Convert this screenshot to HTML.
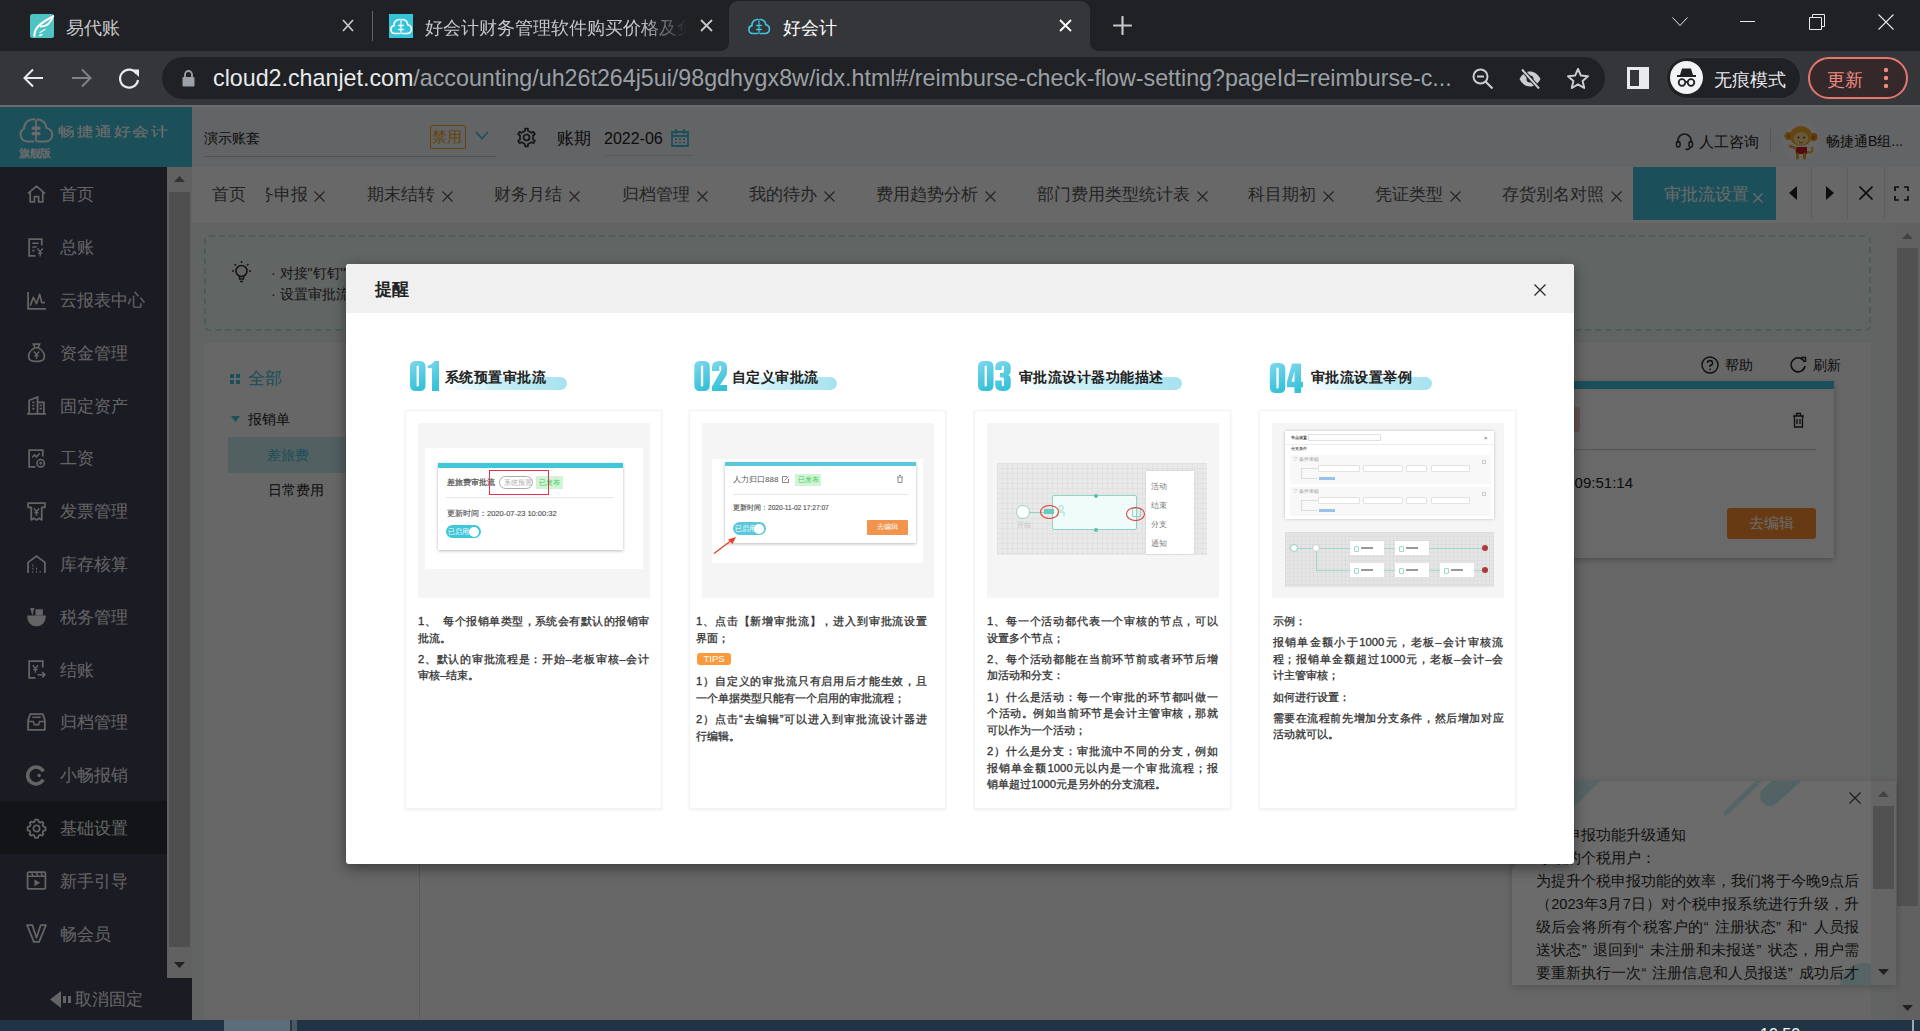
<!DOCTYPE html>
<html><head><meta charset="utf-8">
<style>
*{box-sizing:border-box;margin:0;padding:0}
html,body{width:1920px;height:1031px;overflow:hidden;background:#202124;font-family:"Liberation Sans",sans-serif}
.abs{position:absolute}
.qo,.qc{font-style:normal;display:inline-block;width:0.75em}
.qo{text-align:right}
.qc{text-align:left}
.mi{left:60px;font-size:17px;line-height:20px;color:#eee;white-space:nowrap}
.tb{position:absolute;top:185px;font-size:17px;line-height:20px;color:#555;white-space:nowrap}
.tx{position:absolute;top:191px}
svg{display:block}
/* ---------- browser chrome ---------- */
#tabstrip{position:absolute;left:0;top:0;width:1920px;height:51px;background:#202124}
.tabtxt{position:absolute;top:15.5px;font-size:18px;line-height:24px;color:#c4c7cb;white-space:nowrap}
#toolbar{position:absolute;left:0;top:51px;width:1920px;height:54px;background:#35363a}
#omni{position:absolute;left:162px;top:6px;width:1443px;height:42px;border-radius:21px;background:#202124}
#url{position:absolute;left:51px;top:7px;font-size:23.25px;line-height:28px;color:#9aa0a6;white-space:nowrap;letter-spacing:0}
#url b{font-weight:normal;color:#e8eaed}
/* ---------- page ---------- */
#page{position:absolute;left:0;top:0;width:1920px;height:1020px;background:#eaeeec;overflow:hidden}
#tabstrip,#toolbar{z-index:5}
#taskbar{position:absolute;left:0;top:1020px;width:1920px;height:11px;background:#213445;overflow:hidden;z-index:6}
#mask{position:absolute;left:0;top:105px;width:1920px;height:915px;background:rgba(0,0,0,.58)}

/* ---------- modal ---------- */
#modal{position:absolute;left:346px;top:264px;width:1228px;height:600px;background:#fff;border-radius:3px;box-shadow:0 4px 14px rgba(0,0,0,.45);z-index:3;overflow:hidden}
#mhead{position:absolute;left:0;top:0;width:1228px;height:49px;background:#f0f0f0}
#mtitle{position:absolute;left:29px;top:15px;font-size:16.5px;line-height:20px;font-weight:bold;color:#222}
.card{position:absolute;top:146px;width:257px;height:399px;background:#fff;border:1px solid #f3f3f3;box-shadow:0 1px 3px 0 rgba(0,0,0,.07)}
.shot{position:absolute;top:12px;left:12px;width:232px;height:175px;background:#f5f5f5;overflow:hidden}
.txt{position:absolute;top:349px;width:231px;font-size:11.3px;line-height:16.6px;color:#333;font-weight:normal;-webkit-text-stroke:0.3px #333;z-index:2}
.pp{margin-bottom:4.6px}
.lf{white-space:nowrap;text-align:justify;text-align-last:justify}
.ll{white-space:nowrap}
.tips{margin:7px 0 8px 1px;width:34px;height:12px;line-height:12px;text-align:center;border-radius:3px;background:#fa9a3c;color:#fff;font-size:9.5px;font-weight:normal;-webkit-text-stroke:0}
.num{position:absolute;top:96px}
.htitle{position:absolute;top:104px;font-size:14.4px;letter-spacing:0.45px;line-height:18px;font-weight:bold;color:#222;white-space:nowrap;z-index:2}
.pill{position:absolute;top:113px;height:13px;border-radius:0 7px 7px 0;background:linear-gradient(90deg,rgba(168,228,240,0) 0%,rgba(168,228,240,.6) 40%,#a6e2ef 100%)}

.m{position:absolute;white-space:nowrap;line-height:1}
.sw{position:absolute;background:#fff}
.sel{position:absolute;height:7px;border:1px solid #e2e2e2;background:#fff;border-radius:1px}
.fn{position:absolute;width:34px;height:14px;background:#fff}
.fn:before{content:"";position:absolute;left:4px;top:5px;width:3px;height:4px;border:1px solid #9fd8cc;border-radius:1px}
.fn:after{content:"";position:absolute;left:11px;top:6px;width:12px;height:2px;background:#999}
</style></head><body>
<div id="tabstrip">
  <!-- tab1 -->
  <svg class="abs" style="left:30px;top:14px" width="24" height="24" viewBox="0 0 24 24"><rect width="24" height="24" rx="2.5" fill="#4fc3c3"/><path d="M4.5 22C4 15 9 9.5 23 2.5C21 8 17 12.5 11 12.5" stroke="#fff" fill="none" stroke-width="2" stroke-linecap="round"/><path d="M10 18.5L15 15.5M9.5 21.5L12 20.5" stroke="#e8f8f8" stroke-width="1.4" stroke-linecap="round"/></svg>
  <div class="tabtxt" style="left:66px">易代账</div>
  <svg class="abs" style="left:342px;top:19px" width="12" height="13" viewBox="0 0 12 13"><path d="M1 1L11 12M11 1L1 12" stroke="#c4c7c5" stroke-width="1.8"/></svg>
  <div class="abs" style="left:372px;top:11px;width:1px;height:30px;background:#5f6368"></div>
  <!-- tab2 -->
  <svg class="abs" style="left:389px;top:14px" width="24" height="24" viewBox="0 0 24 24"><rect width="24" height="24" fill="#35c3da"/><path d="M10.5 19.5H6A4 4 0 0 1 5 11.6A5.5 5.5 0 0 1 11 5.5M13 5.5A5.5 5.5 0 0 1 18.8 10.8A4.4 4.4 0 0 1 18.5 19.5H13.5" stroke="#fff" fill="none" stroke-width="1.6" stroke-linecap="round"/><path d="M12 6V20" stroke="#fff" stroke-width="1.6" opacity=".7"/><path d="M9.8 11.5H14.2M9.8 15.5H14.2" stroke="#fff" stroke-width="1.6" stroke-linecap="round"/></svg>
  <div class="tabtxt" style="left:425px;width:262px;overflow:hidden;-webkit-mask-image:linear-gradient(90deg,#000 215px,transparent 262px)">好会计财务管理软件购买价格及免</div>
  <svg class="abs" style="left:700px;top:19px" width="13" height="13" viewBox="0 0 13 13"><path d="M1 1L12 12M12 1L1 12" stroke="#c4c7c5" stroke-width="1.8"/></svg>
  <!-- active tab -->
  <div class="abs" style="left:729px;top:1px;width:361px;height:50px;background:#35363a;border-radius:9px 9px 0 0"></div>
  <div class="abs" style="left:721px;top:43px;width:8px;height:8px;background:radial-gradient(circle at 0 0,transparent 7.5px,#35363a 8.2px)"></div>
  <div class="abs" style="left:1090px;top:43px;width:8px;height:8px;background:radial-gradient(circle at 100% 0,transparent 7.5px,#35363a 8.2px)"></div>
  <svg class="abs" style="left:747px;top:14px" width="24" height="24" viewBox="0 0 24 24"><path d="M10.5 19.5H6A4 4 0 0 1 5 11.6A5.5 5.5 0 0 1 11 5.5M13 5.5A5.5 5.5 0 0 1 18.8 10.8A4.4 4.4 0 0 1 18.5 19.5H13.5" stroke="#3fc8e0" fill="none" stroke-width="1.6" stroke-linecap="round"/><path d="M12 6V20" stroke="#3fc8e0" stroke-width="1.6" opacity=".7"/><path d="M9.8 11.5H14.2M9.8 15.5H14.2" stroke="#3fc8e0" stroke-width="1.6" stroke-linecap="round"/></svg>
  <div class="tabtxt" style="left:783px;color:#fff">好会计</div>
  <svg class="abs" style="left:1059px;top:19px" width="13" height="13" viewBox="0 0 13 13"><path d="M1 1L12 12M12 1L1 12" stroke="#fff" stroke-width="1.8"/></svg>
  <svg class="abs" style="left:1113px;top:16px" width="19" height="19" viewBox="0 0 19 19"><path d="M9.5 1V18M1 9.5H18" stroke="#c4c7c5" stroke-width="2.2" stroke-linecap="round"/></svg>
  <!-- window controls -->
  <svg class="abs" style="left:1672px;top:17px" width="16" height="10" viewBox="0 0 16 10"><path d="M0.5 0.5L8 8.5L15.5 0.5" stroke="#e8eaed" fill="none" stroke-width="1"/></svg>
  <div class="abs" style="left:1740px;top:21px;width:15px;height:1px;background:#e8eaed"></div>
  <svg class="abs" style="left:1809px;top:14px" width="16" height="16" viewBox="0 0 16 16"><path d="M0.5 3.5H12.5V15.5H0.5Z M3.5 3.5V0.5H15.5V12.5H12.5" stroke="#e8eaed" fill="none" stroke-width="1"/></svg>
  <svg class="abs" style="left:1878px;top:14px" width="16" height="16" viewBox="0 0 16 16"><path d="M0.5 0.5L15.5 15.5M15.5 0.5L0.5 15.5" stroke="#e8eaed" stroke-width="1.1"/></svg>
</div>
<div id="toolbar">
  <svg class="abs" style="left:23px;top:17px" width="21" height="20" viewBox="0 0 21 20"><path d="M20 10H2M10 1.5L1.5 10L10 18.5" stroke="#e8eaed" fill="none" stroke-width="2"/></svg>
  <svg class="abs" style="left:71px;top:17px" width="21" height="20" viewBox="0 0 21 20"><path d="M1 10H19M11 1.5L19.5 10L11 18.5" stroke="#7f8387" fill="none" stroke-width="2"/></svg>
  <svg class="abs" style="left:118px;top:16px" width="23" height="23" viewBox="0 0 23 23"><path d="M18.5 6.5A9 9 0 1 0 20 13" stroke="#e8eaed" fill="none" stroke-width="2.2"/><path d="M13.5 2.5H21V10Z" fill="#e8eaed"/></svg>
  <div id="omni">
    <svg class="abs" style="left:20px;top:13px" width="13" height="17" viewBox="0 0 13 17"><path d="M3 7V4.5A3.5 3.5 0 0 1 10 4.5V7" stroke="#9aa0a6" fill="none" stroke-width="1.8"/><rect x="0.5" y="7" width="12" height="9.5" rx="1" fill="#9aa0a6"/></svg>
    <div id="url"><b>cloud2.chanjet.com</b>/accounting/uh26t264j5ui/98gdhygx8w/idx.html#/reimburse-check-flow-setting?pageId=reimburse-c...</div>
  </div>

  <!-- omnibox icons -->
  <svg class="abs" style="left:1472px;top:17px" width="22" height="22" viewBox="0 0 22 22"><circle cx="8.5" cy="8.5" r="7" stroke="#c9ccd0" fill="none" stroke-width="2"/><path d="M5 8.5H12M13.5 13.5L20.5 20.5" stroke="#c9ccd0" stroke-width="2.2"/></svg>
  <svg class="abs" style="left:1518px;top:17px" width="24" height="22" viewBox="0 0 24 22"><path d="M1.5 11C4.5 5.5 8 3.5 12 3.5S19.5 5.5 22.5 11C19.5 16.5 16 18.5 12 18.5S4.5 16.5 1.5 11Z" fill="#c9ccd0"/><circle cx="12" cy="11" r="3.5" fill="#202124"/><path d="M4 1.5L21 20.5" stroke="#202124" stroke-width="4"/><path d="M4 1.5L21 20.5" stroke="#c9ccd0" stroke-width="2"/></svg>
  <svg class="abs" style="left:1566px;top:16px" width="24" height="23" viewBox="0 0 24 23"><path d="M12 2L14.9 8.6L22 9.2L16.6 13.9L18.2 21L12 17.3L5.8 21L7.4 13.9L2 9.2L9.1 8.6Z" stroke="#c9ccd0" fill="none" stroke-width="2" stroke-linejoin="round"/></svg>
  <svg class="abs" style="left:1627px;top:67px;top:16px" width="22" height="22" viewBox="0 0 22 22"><rect x="1.5" y="1.5" width="19" height="19" stroke="#e8eaed" fill="none" stroke-width="3"/><rect x="12" y="1.5" width="8.5" height="19" fill="#e8eaed"/></svg>
  <div class="abs" style="left:1666px;top:6px;width:135px;height:42px;border-radius:21px;background:#202124;border:1px solid #3c3d41"></div>
  <div class="abs" style="left:1670px;top:10px;width:33px;height:33px;border-radius:50%;background:#f1f3f4"></div>
  <svg class="abs" style="left:1673px;top:13px" width="27" height="27" viewBox="0 0 27 27"><path d="M7 11L9 4.5H18L20 11Z" fill="#202124"/><rect x="4" y="11" width="19" height="2" fill="#202124"/><circle cx="9" cy="18.5" r="3.3" stroke="#202124" fill="none" stroke-width="1.8"/><circle cx="18" cy="18.5" r="3.3" stroke="#202124" fill="none" stroke-width="1.8"/><path d="M12.3 18H14.7" stroke="#202124" stroke-width="1.8"/></svg>
  <div class="abs" style="left:1714px;top:17px;font-size:18px;line-height:24px;color:#e8eaed;white-space:nowrap">无痕模式</div>
  <div class="abs" style="left:1808px;top:6px;width:100px;height:42px;border-radius:21px;background:#35282a;border:2px solid #e5776f"></div>
  <div class="abs" style="left:1827px;top:17px;font-size:18px;line-height:24px;color:#f28b82;white-space:nowrap">更新</div>
  <svg class="abs" style="left:1882px;top:15px" width="8" height="24" viewBox="0 0 8 24"><circle cx="4" cy="4" r="2.2" fill="#f28b82"/><circle cx="4" cy="12" r="2.2" fill="#f28b82"/><circle cx="4" cy="20" r="2.2" fill="#f28b82"/></svg>
</div>
<div id="page">
  <div class="abs" style="left:0;top:105px;width:1920px;height:2px;background:#fff"></div>
  <!-- ===== sidebar ===== -->
  <div class="abs" style="left:0;top:107px;width:192px;height:60px;background:#40bcd6"></div>
  <svg class="abs" style="left:18px;top:118px" width="36" height="25" viewBox="0 0 36 25"><path d="M15.5 23.5H9A7 7 0 0 1 6 10.5A9.5 9.5 0 0 1 16.5 1.2M20 1.5A9 9 0 0 1 28.5 10A6.8 6.8 0 0 1 28 23.5H19.5" stroke="#fff" fill="none" stroke-width="2" stroke-linecap="round"/><path d="M18 1.5V23.5" stroke="#fff" stroke-width="1.8"/><path d="M15 10.2H21M15 15.6H21" stroke="#fff" stroke-width="3.2" stroke-linecap="round"/></svg>
  <div class="abs" style="left:58px;top:122.5px;font-size:13px;line-height:18px;color:#fff;font-weight:bold;white-space:nowrap;letter-spacing:1.3px;transform:scaleX(1.3);transform-origin:0 0;-webkit-text-stroke:0.2px #fff;font-weight:normal">畅捷通好会计</div>
  <div class="abs" style="left:19px;top:146px;font-size:11px;line-height:14px;color:#fff;font-weight:bold;white-space:nowrap;letter-spacing:-0.5px">旗舰版</div>
  <div class="abs" style="left:0;top:167px;width:167px;height:811px;background:#404056"></div>
  <div class="abs" style="left:0;top:801px;width:167px;height:52.8px;background:#2d3039"></div>
  <div class="abs" style="left:0;top:978px;width:192px;height:42px;background:#404056"></div>
  <!-- sidebar scrollbar -->
  <div class="abs" style="left:167px;top:167px;width:25px;height:811px;background:#e6e6e6"></div>
  <svg class="abs" style="left:174px;top:176px" width="11" height="6" viewBox="0 0 11 6"><path d="M0 6L5.5 0L11 6Z" fill="#7a7a7a"/></svg>
  <div class="abs" style="left:169px;top:192px;width:21px;height:755px;background:#bdbdbd"></div>
  <svg class="abs" style="left:174px;top:962px" width="11" height="6" viewBox="0 0 11 6"><path d="M0 0L5.5 6L11 0Z" fill="#505050"/></svg>
  <svg class="abs" style="left:26px;top:183.9px" width="21" height="21" viewBox="0 0 20 20"><path d="M2 9L10 2L18 9M4 7.5V17H8V12H12V17H16V7.5" stroke="#eeeeee" fill="none" stroke-width="1.7" stroke-linejoin="round"/></svg>
  <div class="abs mi" style="top:185.4px">首页</div>
  <svg class="abs" style="left:26px;top:236.7px" width="21" height="21" viewBox="0 0 20 20"><path d="M15 8V2H3V18H9" stroke="#eeeeee" fill="none" stroke-width="1.7"/><path d="M6 6H12M6 9.5H10M6 13H8" stroke="#eeeeee" stroke-width="1.5"/><path d="M11 11L13.5 14L16 11M13.5 14V18.5M11.5 15.5H15.5" stroke="#eeeeee" fill="none" stroke-width="1.3"/></svg>
  <div class="abs mi" style="top:238.2px">总账</div>
  <svg class="abs" style="left:26px;top:289.5px" width="21" height="21" viewBox="0 0 20 20"><path d="M2 2V18H19" stroke="#eeeeee" fill="none" stroke-width="1.7"/><path d="M4 15L7 7L10 13L13 4L15 12L18 12" stroke="#eeeeee" fill="none" stroke-width="1.6" stroke-linejoin="round"/></svg>
  <div class="abs mi" style="top:291.0px">云报表中心</div>
  <svg class="abs" style="left:26px;top:342.3px" width="21" height="21" viewBox="0 0 20 20"><path d="M7 2H13L11.5 5.5H8.5Z" stroke="#eeeeee" fill="none" stroke-width="1.5"/><path d="M8.5 5.5C3 8 1.5 13 3 16C4 18 6 18.5 10 18.5S16 18 17 16C18.5 13 17 8 11.5 5.5" stroke="#eeeeee" fill="none" stroke-width="1.7"/><path d="M7.5 9L10 12L12.5 9M10 12V16M8 13H12" stroke="#eeeeee" fill="none" stroke-width="1.4"/></svg>
  <div class="abs mi" style="top:343.8px">资金管理</div>
  <svg class="abs" style="left:26px;top:395.1px" width="21" height="21" viewBox="0 0 20 20"><path d="M3 18V5L11 2V18M11 7H17V18M1 18H19" stroke="#eeeeee" fill="none" stroke-width="1.7"/><path d="M6 7H8M6 10H8M6 13H8M13 10H15M13 13H15" stroke="#eeeeee" stroke-width="1.5"/></svg>
  <div class="abs mi" style="top:396.6px">固定资产</div>
  <svg class="abs" style="left:26px;top:447.9px" width="21" height="21" viewBox="0 0 20 20"><path d="M16 8V2H3V18H9" stroke="#eeeeee" fill="none" stroke-width="1.7"/><path d="M6 9L8 6.5L10 8.5L13 5" stroke="#eeeeee" fill="none" stroke-width="1.5"/><circle cx="14" cy="14.5" r="3.5" stroke="#eeeeee" fill="none" stroke-width="1.5"/><path d="M12.5 14.5H15.5M14 13V16" stroke="#eeeeee" stroke-width="1.2"/></svg>
  <div class="abs mi" style="top:449.4px">工资</div>
  <svg class="abs" style="left:26px;top:500.7px" width="21" height="21" viewBox="0 0 20 20"><path d="M2 2H18V6H15V18L12.5 16.5L10 18L7.5 16.5L5 18V6H2Z" stroke="#eeeeee" fill="none" stroke-width="1.7" stroke-linejoin="round"/><path d="M7.5 7L10 10L12.5 7M10 10V14M8 11H12" stroke="#eeeeee" fill="none" stroke-width="1.4"/></svg>
  <div class="abs mi" style="top:502.2px">发票管理</div>
  <svg class="abs" style="left:26px;top:553.5px" width="21" height="21" viewBox="0 0 20 20"><path d="M2 18V8L10 2L18 8V18" stroke="#eeeeee" fill="none" stroke-width="1.7"/><path d="M6 11H7M6 14H7M6 17H7M9.5 14H10.5M9.5 17H10.5M13 17H14" stroke="#eeeeee" stroke-width="1.8"/></svg>
  <div class="abs mi" style="top:555.0px">库存核算</div>
  <svg class="abs" style="left:26px;top:606.3px" width="21" height="21" viewBox="0 0 20 20"><path d="M2 10C2 15 5 18.5 10 18.5S18 15 18 10Z" stroke="#eeeeee" fill="#eee" stroke-width="1.7"/><path d="M4 2H8L6 9ZM9 3H16V9H9Z" fill="#eeeeee"/></svg>
  <div class="abs mi" style="top:607.8px">税务管理</div>
  <svg class="abs" style="left:26px;top:659.1px" width="21" height="21" viewBox="0 0 20 20"><path d="M16 8V2H3V18H9" stroke="#eeeeee" fill="none" stroke-width="1.7"/><path d="M6.5 6L9 9L11.5 6M9 9V13M7 10H11" stroke="#eeeeee" fill="none" stroke-width="1.3"/><path d="M11 15H18M15.5 12.5L18 15L15.5 17.5" stroke="#eeeeee" fill="none" stroke-width="1.5"/></svg>
  <div class="abs mi" style="top:660.6px">结账</div>
  <svg class="abs" style="left:26px;top:711.9px" width="21" height="21" viewBox="0 0 20 20"><path d="M4 2H16L18 8V17H2V8Z" stroke="#eeeeee" fill="none" stroke-width="1.7" stroke-linejoin="round"/><path d="M2 9H7L8 12H12L13 9H18M6 5H14" stroke="#eeeeee" fill="none" stroke-width="1.5"/></svg>
  <div class="abs mi" style="top:713.4px">归档管理</div>
  <svg class="abs" style="left:26px;top:764.7px" width="21" height="21" viewBox="0 0 20 20"><path d="M16.5 6A8 8 0 1 0 16.5 14" stroke="#eeeeee" fill="none" stroke-width="3.4"/><circle cx="12.5" cy="10" r="1.6" fill="#eeeeee"/></svg>
  <div class="abs mi" style="top:766.2px">小畅报销</div>
  <svg class="abs" style="left:26px;top:817.5px" width="21" height="21" viewBox="0 0 20 20"><path d="M10 1.5l1.6.2.5 2 1.4.7 1.9-.8 1.2 1.2-.8 1.9.7 1.4 2 .5.2 1.6-.2 1.6-2 .5-.7 1.4.8 1.9-1.2 1.2-1.9-.8-1.4.7-.5 2-1.6.2-1.6-.2-.5-2-1.4-.7-1.9.8-1.2-1.2.8-1.9-.7-1.4-2-.5L1.5 10l.2-1.6 2-.5.7-1.4-.8-1.9 1.2-1.2 1.9.8 1.4-.7.5-2Z" stroke="#eeeeee" fill="none" stroke-width="1.7" stroke-linejoin="round"/><circle cx="10" cy="10" r="3" stroke="#eeeeee" fill="none" stroke-width="1.7"/></svg>
  <div class="abs mi" style="top:819.0px">基础设置</div>
  <svg class="abs" style="left:26px;top:870.3px" width="21" height="21" viewBox="0 0 20 20"><rect x="1.5" y="2" width="17" height="16" rx="1" stroke="#eeeeee" fill="none" stroke-width="1.7"/><path d="M1.5 6H18.5M5 2L7 6M9.5 2L11.5 6M14 2L16 6" stroke="#eeeeee" stroke-width="1.3"/><path d="M8 9V15.5L13.5 12.2Z" fill="#eeeeee"/></svg>
  <div class="abs mi" style="top:871.8px">新手引导</div>
  <svg class="abs" style="left:26px;top:923.1px" width="21" height="21" viewBox="0 0 20 20"><path d="M1 2H6L10 14L14 2H19L12.5 18H7.5Z" stroke="#eeeeee" fill="none" stroke-width="1.7" stroke-linejoin="round"/></svg>
  <div class="abs mi" style="top:924.6px">畅会员</div>
  <svg class="abs" style="left:50px;top:991px" width="22" height="17" viewBox="0 0 22 17"><path d="M11 0V17L0 8.5Z" fill="#eee"/><rect x="13" y="5" width="3" height="7" fill="#eee"/><rect x="18" y="5" width="3" height="7" fill="#eee"/></svg>
  <div class="abs" style="left:75px;top:990px;font-size:17px;line-height:20px;color:#f0f0f0;white-space:nowrap">取消固定</div>
  <!-- ===== header ===== -->
  <div class="abs" style="left:192px;top:107px;width:1728px;height:60px;background:#eceef1"></div>
  <div class="abs" style="left:204px;top:129px;font-size:14px;line-height:18px;color:#222;white-space:nowrap">演示账套</div>
  <div class="abs" style="left:204px;top:156px;width:292px;height:1px;background:#c8c8c8"></div>
  <div class="abs" style="left:430px;top:125px;width:36px;height:24px;border:1px solid #f0a020;border-radius:2px;background:transparent"></div>
  <div class="abs" style="left:432px;top:128px;font-size:15px;line-height:18px;color:#f0a020;white-space:nowrap">禁用</div>
  <svg class="abs" style="left:475px;top:131px" width="14" height="9" viewBox="0 0 14 9"><path d="M1 1L7 7.5L13 1" stroke="#40bcd6" fill="none" stroke-width="1.6"/></svg>
  <svg class="abs" style="left:516px;top:127px" width="21" height="21" viewBox="0 0 21 21"><path d="M8.97 3.87 L9.09 1.61 L11.91 1.61 L12.03 3.87 L15.47 5.86 L17.49 4.84 L18.90 7.27 L17.00 8.51 L17.00 12.49 L18.90 13.73 L17.49 16.16 L15.47 15.14 L12.03 17.13 L11.91 19.39 L9.09 19.39 L8.97 17.13 L5.53 15.14 L3.51 16.16 L2.10 13.73 L4.00 12.49 L4.00 8.51 L2.10 7.27 L3.51 4.84 L5.53 5.86Z" stroke="#333" fill="none" stroke-width="1.7" stroke-linejoin="round"/><circle cx="10.5" cy="10.5" r="3" stroke="#333" fill="none" stroke-width="1.7"/></svg>
  <div class="abs" style="left:557px;top:128px;font-size:16.5px;line-height:20px;color:#222;white-space:nowrap">账期</div>
  <div class="abs" style="left:604px;top:128.5px;font-size:16px;line-height:20px;color:#222;white-space:nowrap">2022-06</div>
  <svg class="abs" style="left:671px;top:128px" width="18" height="19" viewBox="0 0 18 19"><path d="M1 4H17V18H1Z" stroke="#40bcd6" fill="none" stroke-width="1.8"/><path d="M5 1V6M13 1V6M1 8H17" stroke="#40bcd6" stroke-width="1.8"/><path d="M4 11H6M8 11H10M12 11H14M4 14.5H6M8 14.5H10M12 14.5H14" stroke="#40bcd6" stroke-width="1.6"/></svg>
  <div class="abs" style="left:605px;top:155px;width:88px;height:1px;background:#d0d0d0"></div>
  <svg class="abs" style="left:1675px;top:132px" width="19" height="19" viewBox="0 0 19 19"><path d="M3 11V8.5A6.5 6.5 0 0 1 16 8.5V11" stroke="#333" fill="none" stroke-width="1.6"/><rect x="1.5" y="9.5" width="3.5" height="5.5" rx="1.5" stroke="#333" fill="none" stroke-width="1.5"/><rect x="14" y="9.5" width="3.5" height="5.5" rx="1.5" stroke="#333" fill="none" stroke-width="1.5"/><path d="M15.5 15C15 17 13 17.5 10.5 17.5" stroke="#333" fill="none" stroke-width="1.5"/></svg>
  <div class="abs" style="left:1699px;top:133px;font-size:14.5px;line-height:18px;color:#222;white-space:nowrap">人工咨询</div>
  <div class="abs" style="left:1770px;top:129px;width:1px;height:24px;background:#c8c8c8"></div>
  <svg class="abs" style="left:1781px;top:121px" width="40" height="40" viewBox="0 0 40 40"><circle cx="20" cy="20" r="19" fill="#f2f2f2"/><circle cx="7.5" cy="15" r="4" fill="#e8a020"/><circle cx="32.5" cy="16" r="4" fill="#e09018"/><circle cx="7.8" cy="15.2" r="2" fill="#d07a20"/><circle cx="32" cy="16.2" r="2" fill="#c86a18"/><ellipse cx="20" cy="15" rx="11" ry="10" fill="#eaa42a"/><ellipse cx="20" cy="17.5" rx="7.5" ry="6.5" fill="#f6d58e"/><circle cx="17.5" cy="16.5" r="1" fill="#5a3a2a"/><circle cx="23" cy="16.5" r="1" fill="#5a3a2a"/><path d="M18 21Q20 23 22 21" stroke="#b8561a" fill="none" stroke-width="1"/><path d="M14.5 26H26V33H15Z" fill="#c81e1e"/><path d="M14.5 27L9 25" stroke="#eaa42a" stroke-width="2.5" stroke-linecap="round"/><path d="M16.5 33V37M23.5 33V37" stroke="#e49a28" stroke-width="3" stroke-linecap="round"/><path d="M26 31Q33 33 31 26" stroke="#eaa42a" fill="none" stroke-width="2"/></svg>
  <div class="abs" style="left:1826px;top:132px;font-size:14px;line-height:18px;color:#222;white-space:nowrap">畅捷通B组...</div>
  <!-- ===== tab bar ===== -->
  <div class="abs" style="left:192px;top:167px;width:1728px;height:56px;background:#f8f8f8"></div>
  <div class="tb" style="left:212px">首页</div>
  <div class="abs" style="left:266px;top:167px;width:1367px;height:56px;overflow:hidden"><div class="tb" style="left:-9px;top:18px">务申报</div></div>
  <svg class="tx" style="left:314px" width="11" height="11" viewBox="0 0 11 11"><path d="M0.5 0.5L10.5 10.5M10.5 0.5L0.5 10.5" stroke="#555" stroke-width="1.15"/></svg>
  <div class="tb" style="left:367px">期末结转</div>
  <svg class="tx" style="left:442px" width="11" height="11" viewBox="0 0 11 11"><path d="M0.5 0.5L10.5 10.5M10.5 0.5L0.5 10.5" stroke="#555" stroke-width="1.15"/></svg>
  <div class="tb" style="left:494px">财务月结</div>
  <svg class="tx" style="left:569px" width="11" height="11" viewBox="0 0 11 11"><path d="M0.5 0.5L10.5 10.5M10.5 0.5L0.5 10.5" stroke="#555" stroke-width="1.15"/></svg>
  <div class="tb" style="left:622px">归档管理</div>
  <svg class="tx" style="left:697px" width="11" height="11" viewBox="0 0 11 11"><path d="M0.5 0.5L10.5 10.5M10.5 0.5L0.5 10.5" stroke="#555" stroke-width="1.15"/></svg>
  <div class="tb" style="left:749px">我的待办</div>
  <svg class="tx" style="left:824px" width="11" height="11" viewBox="0 0 11 11"><path d="M0.5 0.5L10.5 10.5M10.5 0.5L0.5 10.5" stroke="#555" stroke-width="1.15"/></svg>
  <div class="tb" style="left:876px">费用趋势分析</div>
  <svg class="tx" style="left:985px" width="11" height="11" viewBox="0 0 11 11"><path d="M0.5 0.5L10.5 10.5M10.5 0.5L0.5 10.5" stroke="#555" stroke-width="1.15"/></svg>
  <div class="tb" style="left:1037px">部门费用类型统计表</div>
  <svg class="tx" style="left:1197px" width="11" height="11" viewBox="0 0 11 11"><path d="M0.5 0.5L10.5 10.5M10.5 0.5L0.5 10.5" stroke="#555" stroke-width="1.15"/></svg>
  <div class="tb" style="left:1248px">科目期初</div>
  <svg class="tx" style="left:1323px" width="11" height="11" viewBox="0 0 11 11"><path d="M0.5 0.5L10.5 10.5M10.5 0.5L0.5 10.5" stroke="#555" stroke-width="1.15"/></svg>
  <div class="tb" style="left:1375px">凭证类型</div>
  <svg class="tx" style="left:1450px" width="11" height="11" viewBox="0 0 11 11"><path d="M0.5 0.5L10.5 10.5M10.5 0.5L0.5 10.5" stroke="#555" stroke-width="1.15"/></svg>
  <div class="tb" style="left:1502px">存货别名对照</div>
  <svg class="tx" style="left:1611px" width="11" height="11" viewBox="0 0 11 11"><path d="M0.5 0.5L10.5 10.5M10.5 0.5L0.5 10.5" stroke="#555" stroke-width="1.15"/></svg>
  <div class="abs" style="left:1633px;top:167px;width:143px;height:53px;background:#40bcd6"></div>
  <div class="tb" style="left:1664px;color:#fff">审批流设置</div>
  <svg class="tx" style="left:1753px;top:193px" width="10" height="10" viewBox="0 0 10 10"><path d="M0.5 0.5L9.5 9.5M9.5 0.5L0.5 9.5" stroke="#fff" stroke-width="1.3"/></svg>
  <div class="abs" style="left:1811px;top:167px;width:1px;height:53px;background:#ddd"></div>
  <div class="abs" style="left:1847px;top:167px;width:1px;height:53px;background:#ddd"></div>
  <div class="abs" style="left:1884px;top:167px;width:1px;height:53px;background:#ddd"></div>
  <svg class="abs" style="left:1789px;top:186px" width="9" height="14" viewBox="0 0 9 14"><path d="M8 0V14L0 7Z" fill="#222"/></svg>
  <svg class="abs" style="left:1825px;top:186px" width="9" height="14" viewBox="0 0 9 14"><path d="M1 0V14L9 7Z" fill="#222"/></svg>
  <svg class="abs" style="left:1859px;top:186px" width="14" height="14" viewBox="0 0 14 14"><path d="M0.5 0.5L13.5 13.5M13.5 0.5L0.5 13.5" stroke="#222" stroke-width="1.6"/></svg>
  <svg class="abs" style="left:1894px;top:186px" width="15" height="15" viewBox="0 0 15 15"><path d="M1 5V1H5M10 1H14V5M14 10V14H10M5 14H1V10" stroke="#222" fill="none" stroke-width="1.7"/></svg>
  <!-- ===== content ===== -->
  <!-- tips box -->
  <div class="abs" style="left:204px;top:235px;width:1667px;height:96px;border:2px dashed #b0e0c3;border-radius:5px;background:#e8f0ec"></div>
  <svg class="abs" style="left:230px;top:260px" width="23" height="24" viewBox="0 0 23 24"><circle cx="11.5" cy="11" r="5.5" stroke="#333" fill="none" stroke-width="1.6"/><path d="M9.5 16.5V19H13.5V16.5M10 21.5H13M11.5 1V3M2 11H4M19 11H21M4.5 4L6 5.5M18.5 4L17 5.5" stroke="#333" fill="none" stroke-width="1.5"/></svg>
  <div class="abs" style="left:271px;top:262.5px;font-size:14px;line-height:21px;color:#333;white-space:nowrap">· 对接"钉钉"审批，需在钉钉后台开启审批流程<br>· 设置审批流程后，单据提交后将按照流程进行审批</div>
  <!-- main panel -->
  <div class="abs" style="left:204px;top:343px;width:1667px;height:677px;background:#f5f5f5"></div>
  <div class="abs" style="left:419px;top:343px;width:1px;height:677px;background:#d6d6d6"></div>
  <svg class="abs" style="left:230px;top:374px" width="10" height="10" viewBox="0 0 10 10"><rect x="0" y="0" width="4" height="4" fill="#40bcd6"/><rect x="6" y="0" width="4" height="4" fill="#40bcd6"/><rect x="0" y="6" width="4" height="4" fill="#40bcd6"/><rect x="6" y="6" width="4" height="4" fill="#40bcd6"/></svg>
  <div class="abs" style="left:248px;top:369px;font-size:17px;line-height:20px;color:#40bcd6;white-space:nowrap">全部</div>
  <svg class="abs" style="left:231px;top:416px" width="9" height="6" viewBox="0 0 9 6"><path d="M0 0H9L4.5 6Z" fill="#40bcd6"/></svg>
  <div class="abs" style="left:248px;top:410px;font-size:14px;line-height:18px;color:#222;white-space:nowrap">报销单</div>
  <div class="abs" style="left:228px;top:437px;width:191px;height:36px;background:#c4e4ea"></div>
  <div class="abs" style="left:267px;top:446px;font-size:14px;line-height:18px;color:#40bcd6;white-space:nowrap">差旅费</div>
  <div class="abs" style="left:268px;top:481px;font-size:14px;line-height:18px;color:#222;white-space:nowrap">日常费用</div>
  <!-- toolbar right -->
  <svg class="abs" style="left:1701px;top:356px" width="18" height="18" viewBox="0 0 18 18"><circle cx="9" cy="9" r="8" stroke="#222" fill="none" stroke-width="1.4"/><path d="M6.5 7A2.5 2.5 0 1 1 9 9.5V11" stroke="#222" fill="none" stroke-width="1.4"/><circle cx="9" cy="13.3" r="0.9" fill="#222"/></svg>
  <div class="abs" style="left:1725px;top:356px;font-size:14px;line-height:18px;color:#222;white-space:nowrap">帮助</div>
  <svg class="abs" style="left:1789px;top:356px" width="18" height="18" viewBox="0 0 18 18"><path d="M15.5 6A7 7 0 1 0 16 10" stroke="#222" fill="none" stroke-width="1.5"/><path d="M12 1.5L16.5 1.5L16.5 6" stroke="#222" fill="none" stroke-width="1.5"/></svg>
  <div class="abs" style="left:1813px;top:356px;font-size:14px;line-height:18px;color:#222;white-space:nowrap">刷新</div>
  <!-- card -->
  <div class="abs" style="left:1434px;top:381px;width:400px;height:177px;background:#fafafa;box-shadow:0 2px 6px rgba(0,0,0,.25);border-top:8px solid #40bcd6"></div>
  <div class="abs" style="left:1556px;top:407px;width:24px;height:25px;border-radius:3px;background:#f2c9c9"></div>
  <svg class="abs" style="left:1792px;top:412px" width="13" height="16" viewBox="0 0 13 16"><path d="M1 4H12M4.5 4V1.5H8.5V4M2.5 4V15H10.5V4M5 7V12M8 7V12" stroke="#222" fill="none" stroke-width="1.3"/></svg>
  <div class="abs" style="left:1454px;top:449px;width:362px;height:1px;background:#c8c8c8"></div>
  <div class="abs" style="right:287px;top:473px;font-size:15px;line-height:20px;color:#222;white-space:nowrap;text-align:right">更新时间：2022-06-30 09:51:14</div>
  <div class="abs" style="left:1727px;top:508px;width:89px;height:31px;border-radius:3px;background:#f58a2e"></div>
  <div class="abs" style="left:1749px;top:514px;font-size:14.5px;line-height:18px;color:#fff;white-space:nowrap">去编辑</div>
  <!-- page scrollbar -->
  <div class="abs" style="left:1895px;top:223px;width:25px;height:797px;background:#e8e8e8"></div>
  <svg class="abs" style="left:1902px;top:233px" width="11" height="6" viewBox="0 0 11 6"><path d="M0 6L5.5 0L11 6Z" fill="#a0a0a0"/></svg>
  <div class="abs" style="left:1897px;top:248px;width:21px;height:658px;background:#c0c0c0"></div>
  <svg class="abs" style="left:1902px;top:1005px" width="11" height="6" viewBox="0 0 11 6"><path d="M0 0L5.5 6L11 0Z" fill="#505050"/></svg>
  <!-- notification -->
  <div class="abs" style="left:1512px;top:781px;width:384px;height:204px;background:#fff;box-shadow:0 2px 8px rgba(0,0,0,.2);overflow:hidden">
    <svg class="abs" style="left:0;top:0" width="384" height="204" viewBox="0 0 384 204"><path d="M0 0H88L0 88Z" fill="#cdeef3"/><path d="M247 0L214 32" stroke="#cdeef3" stroke-width="5" stroke-linecap="round"/><path d="M290 -14L258 15" stroke="#c4eaf0" stroke-width="20" stroke-linecap="round"/><circle cx="352" cy="206" r="24" fill="#cdeef3"/></svg>
    <svg class="abs" style="left:337px;top:11px" width="12" height="12" viewBox="0 0 12 12"><path d="M0.5 0.5L11.5 11.5M11.5 0.5L0.5 11.5" stroke="#444" stroke-width="1.1"/></svg>
    <div class="abs" style="left:24px;top:42.5px;width:323px;font-size:14.6px;line-height:23px;color:#2a2a2a">
      <div class="ll">个税申报功能升级通知</div>
      <div class="ll">尊敬的个税用户：</div>
      <div class="lf">为提升个税申报功能的效率，我们将于今晚9点后</div>
      <div class="lf">（2023年3月7日）对个税申报系统进行升级，升</div>
      <div class="lf">级后会将所有个税客户的<i class="qo">“</i>注册状态<i class="qc">”</i>和<i class="qo">“</i>人员报</div>
      <div class="lf">送状态<i class="qc">”</i>退回到<i class="qo">“</i>未注册和未报送<i class="qc">”</i>状态，用户需</div>
      <div class="lf">要重新执行一次<i class="qo">“</i>注册信息和人员报送<i class="qc">”</i>成功后才</div>
    </div>
  </div>
  <div class="abs" style="left:1871px;top:781px;width:25px;height:204px;background:#f0f0f0"></div>
  <svg class="abs" style="left:1878px;top:791px" width="11" height="6" viewBox="0 0 11 6"><path d="M0 6L5.5 0L11 6Z" fill="#a0a0a0"/></svg>
  <div class="abs" style="left:1873px;top:806px;width:21px;height:83px;background:#c0c0c0"></div>
  <svg class="abs" style="left:1878px;top:969px" width="11" height="6" viewBox="0 0 11 6"><path d="M0 0L5.5 6L11 0Z" fill="#505050"/></svg>
  <div id="mask"></div>
</div>
<div id="modal">
  <div id="mhead"><div id="mtitle">提醒</div>
    <svg class="abs" style="left:1188px;top:20px" width="12" height="12" viewBox="0 0 12 12"><path d="M0.5 0.5L11.5 11.5M11.5 0.5L0.5 11.5" stroke="#2a2a2a" stroke-width="1.3"/></svg>
  </div>
  <!-- col 1 -->
  <div class="txt" style="left:72px"><div class="pp"><div class="lf">1、&nbsp;&nbsp;每个报销单类型，系统会有默认的报销审</div><div class="ll">批流。</div></div><div class="pp"><div class="lf">2、默认的审批流程是：开始–老板审核–会计</div><div class="ll">审核–结束。</div></div></div>
  <div class="txt" style="left:350px"><div class="pp"><div class="lf">1、点击【新增审批流】，进入到审批流设置</div><div class="ll">界面；</div></div><div class="tips">TIPS</div><div class="pp"><div class="lf">1）自定义的审批流只有启用后才能生效，且</div><div class="ll">一个单据类型只能有一个启用的审批流程；</div></div><div class="pp"><div class="lf">2）点击“去编辑”可以进入到审批流设计器进</div><div class="ll">行编辑。</div></div></div>
  <div class="txt" style="left:641px"><div class="pp"><div class="lf">1、每一个活动都代表一个审核的节点，可以</div><div class="ll">设置多个节点；</div></div><div class="pp"><div class="lf">2、每个活动都能在当前环节前或者环节后增</div><div class="ll">加活动和分支：</div></div><div class="pp"><div class="lf">1）什么是活动：每一个审批的环节都叫做一</div><div class="lf">个活动。例如当前环节是会计主管审核，那就</div><div class="ll">可以作为一个活动；</div></div><div class="pp"><div class="lf">2）什么是分支：审批流中不同的分支，例如</div><div class="lf">报销单金额1000元以内是一个审批流程；报</div><div class="ll">销单超过1000元是另外的分支流程。</div></div></div>
  <div class="txt" style="left:926.5px"><div class="pp"><div class="ll">示例：</div></div><div class="pp"><div class="lf">报销单金额小于1000元，老板–会计审核流</div><div class="lf">程；报销单金额超过1000元，老板–会计–会</div><div class="ll">计主管审核；</div></div><div class="pp"><div class="ll">如何进行设置：</div></div><div class="pp"><div class="lf">需要在流程前先增加分支条件，然后增加对应</div><div class="ll">活动就可以。</div></div></div>
  <svg class="abs" style="left:0;top:0" width="1228" height="140" viewBox="0 0 1228 140"><defs><linearGradient id="ng" x1="0" y1="0" x2="0.3" y2="1"><stop offset="0" stop-color="#7fd8ec"/><stop offset="1" stop-color="#38c2da"/></linearGradient></defs><path transform="translate(64,97)" d="M5.5 0H10Q15.5 0 15.5 6V24Q15.5 30 10 30H5.5Q0 30 0 24V6Q0 0 5.5 0ZM6.6 5.6Q6.6 4.6 7.75 4.6Q8.9 4.6 8.9 5.6V24.4Q8.9 25.4 7.75 25.4Q6.6 25.4 6.6 24.4Z" fill="url(#ng)" fill-rule="evenodd"/><path transform="translate(81.5,97)" d="M7 0H11.5V30H4.5V7.2H1.5Q0 7.2 0 5.7Q0 4.8 1.5 4.3Q5 3 7 0Z" fill="url(#ng)" fill-rule="evenodd"/><path transform="translate(348.3,97)" d="M5.5 0H10Q15.5 0 15.5 6V24Q15.5 30 10 30H5.5Q0 30 0 24V6Q0 0 5.5 0ZM6.6 5.6Q6.6 4.6 7.75 4.6Q8.9 4.6 8.9 5.6V24.4Q8.9 25.4 7.75 25.4Q6.6 25.4 6.6 24.4Z" fill="url(#ng)" fill-rule="evenodd"/><path transform="translate(366,97)" d="M0 10V6Q0 0 7.5 0Q15 0 15 6V11Q15 13 14 15L8 24H15V30H0V25.5L8.2 11Q9.3 9.5 9.3 8V6Q9.3 4.7 8.3 4.7Q7.3 4.7 7.3 6V10Z" fill="url(#ng)" fill-rule="evenodd"/><path transform="translate(632,97)" d="M5.5 0H10Q15.5 0 15.5 6V24Q15.5 30 10 30H5.5Q0 30 0 24V6Q0 0 5.5 0ZM6.6 5.6Q6.6 4.6 7.75 4.6Q8.9 4.6 8.9 5.6V24.4Q8.9 25.4 7.75 25.4Q6.6 25.4 6.6 24.4Z" fill="url(#ng)" fill-rule="evenodd"/><path transform="translate(649.2,97)" d="M0 9V6Q0 0 7.75 0Q15.5 0 15.5 6V10Q15.5 13 13 14Q15.5 15 15.5 18V24Q15.5 30 7.75 30Q0 30 0 24V19.5H6.6V24Q6.6 25.3 7.7 25.3Q8.8 25.3 8.8 24V18.5Q8.8 16.3 7 16.3H4.8V12H7Q8.8 12 8.8 10V6Q8.8 4.7 7.7 4.7Q6.6 4.7 6.6 6V9Z" fill="url(#ng)" fill-rule="evenodd"/><path transform="translate(923.8,99)" d="M5.5 0H10Q15.5 0 15.5 6V24Q15.5 30 10 30H5.5Q0 30 0 24V6Q0 0 5.5 0ZM6.6 5.6Q6.6 4.6 7.75 4.6Q8.9 4.6 8.9 5.6V24.4Q8.9 25.4 7.75 25.4Q6.6 25.4 6.6 24.4Z" fill="url(#ng)" fill-rule="evenodd"/><path transform="translate(941,99)" d="M5 0.5H14V18.8H16V24.2H14V30H7.5V24.2H0V18.5ZM4.5 18.8H7.5V8Z" fill="url(#ng)" fill-rule="evenodd"/></svg>
  <div class="pill" style="left:99px;width:122px"></div>
  <div class="htitle" style="left:99px">系统预置审批流</div>
  <div class="card" style="left:59px">
    <div class="shot" id="shot1">
      <div class="sw" style="left:7px;top:25px;width:218px;height:121px"></div>
      <div class="sw" style="left:19.5px;top:40px;width:185.5px;height:87px;border-top:5px solid #3ec6d9;box-shadow:0 1px 3px rgba(0,0,0,.28)"></div>
      <div class="m" style="left:29px;top:56px;font-size:8px;color:#555;-webkit-text-stroke:0.25px #555">差旅费审批流</div>
      <div class="m" style="left:81px;top:53px;width:34px;height:13px;border:1px solid #aaa;border-radius:7px;font-size:6.5px;color:#aaa;padding:2.5px 0 0 4px">系统预置</div>
      <div class="m" style="left:118px;top:53px;width:27px;height:13px;background:#d3f3d8;font-size:7px;color:#3ccf55;padding:3px 0 0 3px">已发布</div>
      <div class="m" style="left:71px;top:47px;width:60px;height:25px;border:1.5px solid #e3344c"></div>
      <div class="m" style="left:28px;top:74px;width:168px;height:1px;background:#e6e6e6"></div>
      <div class="m" style="left:29px;top:87px;font-size:7.5px;color:#555;-webkit-text-stroke:0.15px #555">更新时间：2020-07-23 10:00:32</div>
      <div class="m" style="left:28px;top:102px;width:35px;height:13px;border-radius:7px;background:#3ec6d9"></div>
      <div class="m" style="left:51px;top:103.5px;width:10px;height:10px;border-radius:50%;background:#fff"></div>
      <div class="m" style="left:30px;top:105px;font-size:7px;color:#fff">已启用</div>
    </div>
  </div>
  <!-- col 2 -->
  <div class="pill" style="left:385px;width:106px"></div>
  <div class="htitle" style="left:386px">自定义审批流</div>
  <div class="card" style="left:343px">
    <div class="shot" id="shot2">
      <div class="sw" style="left:10px;top:36px;width:211px;height:104px"></div>
      <div class="sw" style="left:23px;top:39px;width:191px;height:81px;border-top:4px solid #5bc8dc;box-shadow:0 1px 3px rgba(0,0,0,.28)"></div>
      <div class="m" style="left:31px;top:53px;font-size:8px;color:#555">人力归口888</div>
      <svg class="abs" style="left:80px;top:53px" width="7" height="7" viewBox="0 0 7 7"><path d="M5 0.5H0.5V6.5H6.5V3M2.5 4.5L6.5 0.5" stroke="#777" fill="none" stroke-width="0.9"/></svg>
      <div class="m" style="left:93px;top:51px;width:26px;height:12px;background:#d3f3d8;font-size:6.5px;color:#3ccf55;padding:3px 0 0 3px">已发布</div>
      <svg class="abs" style="left:195px;top:52px" width="6" height="8" viewBox="0 0 6 8"><path d="M0 2H6M1 2V7.5H5V2M2 0.5H4" stroke="#888" fill="none" stroke-width="1"/></svg>
      <div class="m" style="left:31px;top:71px;width:175px;height:1px;background:#e6e6e6"></div>
      <div class="m" style="left:31px;top:82px;font-size:6.6px;color:#555;-webkit-text-stroke:0.15px #555">更新时间：2020-11-02 17:27:07</div>
      <div class="m" style="left:31px;top:99px;width:33px;height:13px;border-radius:7px;background:#5bc8dc"></div>
      <div class="m" style="left:52px;top:100.5px;width:10px;height:10px;border-radius:50%;background:#fff"></div>
      <div class="m" style="left:33px;top:102px;font-size:7px;color:#fff">已启用</div>
      <div class="m" style="left:165px;top:97px;width:41px;height:15px;border-radius:1px;background:#f0944e;font-size:6.5px;color:#fff;padding:4px 0 0 10px">去编辑</div>
      <svg class="abs" style="left:10px;top:112px" width="26" height="20" viewBox="0 0 26 20"><path d="M2 18.5L20 5" stroke="#e8402c" stroke-width="1.3"/><path d="M24 2L16 4.5L20.5 9Z" fill="#e8402c"/></svg>
    </div>
  </div>
  <!-- col 3 -->
  <div class="pill" style="left:670px;width:166px"></div>
  <div class="htitle" style="left:673px">审批流设计器功能描述</div>
  <div class="card" style="left:628px">
    <div class="shot" id="shot3">
      <div class="m" style="left:10px;top:40px;width:210px;height:92px;background-color:#e9e9e9;background-image:linear-gradient(#e1e1e1 1px,transparent 1px),linear-gradient(90deg,#e1e1e1 1px,transparent 1px);background-size:5px 5px"></div>
      <div class="m" style="left:43px;top:88.5px;width:22px;height:1px;background:#8fd3c5"></div>
      <div class="m" style="left:29px;top:82px;width:14px;height:14px;border-radius:50%;border:1.5px solid #8fd3c5;background:#fff"></div>
      <div class="m" style="left:30px;top:98px;font-size:7px;color:#c4c4c4">开始</div>
      <div class="m" style="left:65px;top:72px;width:85px;height:35px;border:1px solid #8fd3c5;border-radius:2px;background:#effcfa"></div>
      <div class="m" style="left:107px;top:70.5px;width:4px;height:4px;border-radius:50%;background:#5cbfa8"></div>
      <div class="m" style="left:107px;top:105px;width:4px;height:4px;border-radius:50%;background:#5cbfa8"></div>
      <div class="m" style="left:57px;top:86px;width:10px;height:5px;background:#6ccbb6"></div>
      <svg class="abs" style="left:70px;top:82px" width="8" height="12" viewBox="0 0 8 12"><circle cx="4" cy="3" r="2.3" stroke="#9fdccf" fill="none" stroke-width="1"/><path d="M1 11V7H7V11" stroke="#9fdccf" fill="none" stroke-width="1"/></svg>
      <div class="m" style="left:145px;top:85px;width:9px;height:9px;border:1px solid #8fd3c5"></div>
      <div class="m" style="left:53px;top:82px;width:19px;height:14px;border-radius:50%;border:1.7px solid #e33838"></div>
      <div class="m" style="left:139px;top:84px;width:19px;height:14px;border-radius:50%;border:1.7px solid #e33838"></div>
      <div class="m" style="left:159px;top:48px;width:48px;height:83px;background:#fff;box-shadow:0 0 2px rgba(0,0,0,.15)"></div>
      <div class="m" style="left:164px;top:54px;font-size:7.5px;line-height:19px;color:#777;white-space:normal;width:30px">活动<br>结束<br>分支<br>通知</div>
    </div>
  </div>
  <!-- col 4 -->
  <div class="pill" style="left:960px;width:126px"></div>
  <div class="htitle" style="left:965px">审批流设置举例</div>
  <div class="card" style="left:913px">
    <div class="shot" id="shot4">
      <div class="m" style="left:13px;top:8px;width:209px;height:88px;background:#fff;box-shadow:0 0 3px rgba(0,0,0,.22)"></div>
      <div class="m" style="left:19px;top:12.5px;font-size:4px;color:#444;font-weight:bold">节点设置</div>
      <div class="m" style="left:36px;top:11px;width:73px;height:7px;border:1px solid #e0e0e0"></div>
      <div class="m" style="left:212px;top:12px;font-size:6px;color:#666">×</div>
      <div class="m" style="left:13px;top:21px;width:209px;height:1px;background:#eee"></div>
      <div class="m" style="left:19px;top:25px;font-size:3.6px;color:#666;font-weight:bold">分支条件</div>
      <div class="m" style="left:18px;top:32px;width:201px;height:29px;background:#f8f8f8"></div>
      <div class="m" style="left:21px;top:35px;font-size:4.5px;color:#999">▽ 条件审核</div>
      <div class="m" style="left:29px;top:45px;width:16px;height:11px;border-left:1px solid #ddd;border-top:1px solid #ddd;border-bottom:1px solid #ddd"></div>
      <div class="sel" style="left:46px;top:42px;width:42px"></div>
      <div class="sel" style="left:91px;top:42px;width:40px"></div>
      <div class="sel" style="left:134px;top:42px;width:21px"></div>
      <div class="sel" style="left:159px;top:42px;width:39px"></div>
      <div class="m" style="left:47px;top:54px;width:16px;height:3px;background:#9cc0e8"></div>
      <div class="m" style="left:210px;top:37px;width:4px;height:4px;border:1px solid #ccc"></div>
      <div class="m" style="left:18px;top:64px;width:201px;height:29px;background:#f8f8f8"></div>
      <div class="m" style="left:21px;top:67px;font-size:4.5px;color:#999">▽ 条件审核</div>
      <div class="m" style="left:29px;top:77px;width:16px;height:11px;border-left:1px solid #ddd;border-top:1px solid #ddd;border-bottom:1px solid #ddd"></div>
      <div class="sel" style="left:46px;top:74px;width:42px"></div>
      <div class="sel" style="left:91px;top:74px;width:40px"></div>
      <div class="sel" style="left:134px;top:74px;width:21px"></div>
      <div class="sel" style="left:159px;top:74px;width:39px"></div>
      <div class="m" style="left:47px;top:86px;width:16px;height:3px;background:#9cc0e8"></div>
      <div class="m" style="left:210px;top:69px;width:4px;height:4px;border:1px solid #ccc"></div>
      <div class="m" style="left:13px;top:108.5px;width:209px;height:55.5px;background-color:#e5e5e5;background-image:linear-gradient(#dddddd 1px,transparent 1px),linear-gradient(90deg,#dddddd 1px,transparent 1px);background-size:4px 4px"></div>
      <div class="m" style="left:22px;top:125px;width:191px;height:1px;background:#9fd8cc"></div>
      <div class="m" style="left:44px;top:125px;width:1px;height:22px;background:#9fd8cc"></div>
      <div class="m" style="left:44px;top:147px;width:169px;height:1px;background:#9fd8cc"></div>
      <div class="m" style="left:18px;top:121px;width:8px;height:8px;border-radius:50%;border:1px solid #8fd3c5;background:#fff"></div>
      <div class="m" style="left:40px;top:121px;width:8px;height:8px;border-radius:50%;border:1px solid #ccc;background:#fff"></div>
      <div class="fn" style="left:78px;top:118px"></div><div class="fn" style="left:123px;top:118px"></div>
      <div class="fn" style="left:78px;top:140px"></div><div class="fn" style="left:123px;top:140px"></div><div class="fn" style="left:168px;top:140px"></div>
      <div class="m" style="left:209.5px;top:121.5px;width:6px;height:6px;border-radius:50%;background:#b03838"></div>
      <div class="m" style="left:209.5px;top:143.5px;width:6px;height:6px;border-radius:50%;background:#b03838"></div>
    </div>
  </div>
</div>
<div id="taskbar">
  <div class="abs" style="left:224px;top:0;width:66px;height:11px;background:#5c6d7c"></div>
  <div class="abs" style="left:290px;top:0;width:2px;height:11px;background:#2b3744"></div>
  <div class="abs" style="left:292px;top:0;width:5px;height:11px;background:#4b5967"></div>
  <div class="abs" style="left:1760px;top:5px;font-size:16px;line-height:20px;color:#fff;white-space:nowrap">10:50</div>
  <div class="abs" style="left:1912px;top:0;width:2px;height:11px;background:#9aa6b0"></div>
</div>
</body></html>
